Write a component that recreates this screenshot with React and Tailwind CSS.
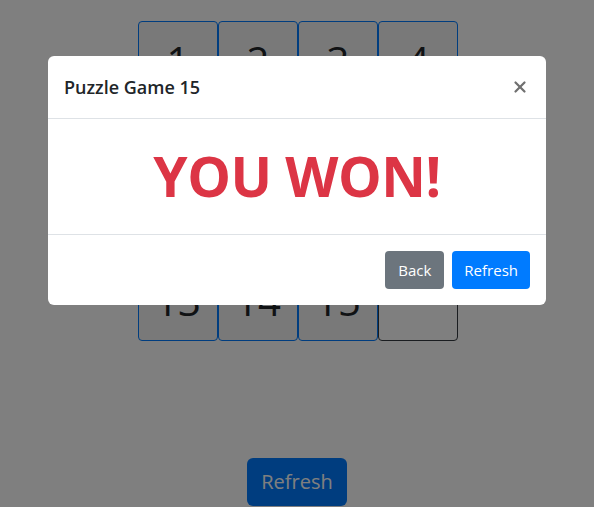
import { X } from 'lucide-react'

const TILES = [1, 2, 3, 4, 5, 6, 7, 8, 9, 10, 11, 12, 13, 14, 15, null]

function Tile({ value }) {
  if (value == null) {
    return <div className="h-[80px] w-[80px] rounded border border-[#343a40] bg-white" />
  }
  return (
    <div className="flex h-[80px] w-[80px] items-center justify-center rounded border border-[#007bff] bg-[#f2f2f2] text-[40px] font-normal text-[#212529]">
      {value}
    </div>
  )
}

export default function App() {
  return (
    <div
      className="relative h-[507px] w-[594px] overflow-hidden bg-white"
      style={{ fontFamily: '"Open Sans", "Noto Sans", sans-serif' }}
    >
      {/* Board */}
      <div className="flex flex-col items-center pt-[21px]">
        <div className="ml-[2px] grid w-[320px] grid-cols-4">
          {TILES.map((t, i) => (
            <Tile key={i} value={t} />
          ))}
        </div>
        <button className="mt-[117px] h-[48px] rounded-md bg-[#007bff] px-[14px] text-[20px] leading-[1.5] text-white">
          Refresh
        </button>
      </div>

      {/* Modal backdrop + dialog */}
      <div className="absolute inset-0 bg-black/50">
        <div className="mx-auto mt-[56px] w-[498px] rounded-md bg-white">
          <div className="flex h-[63px] items-center justify-between border-b border-[#dee2e6] px-4">
            <h5 className="text-[18px] font-semibold leading-[1.5] text-[#212529]">Puzzle Game 15</h5>
            <X size={18} strokeWidth={3} className="mr-[1px] text-[#707070]" />
          </div>
          <div className="flex h-[115px] items-center justify-center">
            <h1 className="mb-[2px] text-[55px] font-bold leading-none tracking-[-0.5px] text-[#dc3545]">YOU WON!</h1>
          </div>
          <div className="flex items-center justify-end gap-2 border-t border-[#dee2e6] p-4">
            <button className="h-[38px] rounded bg-[#6c757d] px-[13px] text-[15px] text-white">Back</button>
            <button className="h-[38px] rounded bg-[#007bff] px-3 text-[15px] text-white">Refresh</button>
          </div>
        </div>
      </div>
    </div>
  )
}
